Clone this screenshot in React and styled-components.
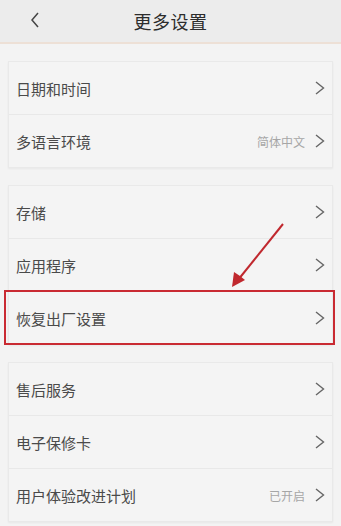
import React from "react";
import styled, { createGlobalStyle } from "styled-components";

const Global = createGlobalStyle`
  html, body { margin: 0; padding: 0; background: #f3f3f3; }
  body { font-family: "Noto Sans CJK SC", "Noto Sans", sans-serif; }
`;

const Page = styled.div`
  position: relative;
  width: 341px;
  height: 526px;
  overflow: hidden;
  background: #f3f3f3;
`;

const Header = styled.div`
  height: 42px;
  background: #ececec;
  border-bottom: 2px solid #ede0d6;
  display: flex;
  align-items: center;
  justify-content: center;
  position: relative;
`;

const Back = styled.svg`
  position: absolute;
  left: 30px;
  top: 12px;
`;

const Title = styled.div`
  font-size: 18px;
  color: #2c2c2c;
  letter-spacing: 0.5px;
`;

const List = styled.div`
  display: flex;
  flex-direction: column;
  gap: 17px;
  padding: 17px 8px 0 8px;
`;

const Card = styled.div`
  background: #f4f4f4;
  border: 1px solid #e9e9e9;
  box-shadow: 0 1px 2px rgba(0, 0, 0, 0.05);
  display: flex;
  flex-direction: column;
`;

const Row = styled.div`
  position: relative;
  height: 52px;
  display: flex;
  align-items: center;
  padding: 0 7px 0 7px;
  & + & { border-top: 1px solid #e8e8e8; }
`;

const Label = styled.div`
  flex: 1;
  font-size: 15px;
  color: #4a4a4a;
`;

const Value = styled.div`
  font-size: 12px;
  color: #a6a6a6;
  margin-right: 9px;
`;

const Highlight = styled.div`
  position: absolute;
  left: -5px;
  right: -3px;
  top: -2px;
  bottom: -1px;
  border: 2px solid #c92a32;
  pointer-events: none;
`;

const Arrow = styled.svg`
  position: absolute;
  left: 0;
  top: 0;
  pointer-events: none;
`;

const Chevron = () => (
  <svg width="11" height="14" viewBox="0 0 11 14">
    <path d="M2 1 L9.5 7 L2 13" fill="none" stroke="#666" strokeWidth="1.4" />
  </svg>
);

const Item = ({ label, value, highlight }) => (
  <Row>
    <Label>{label}</Label>
    {value && <Value>{value}</Value>}
    <Chevron />
    {highlight && <Highlight />}
  </Row>
);

export default function App() {
  return (
    <Page>
      <Global />
      <Header>
        <Back width="10" height="16" viewBox="0 0 10 16">
          <path d="M8 1 L2 8 L8 15" fill="none" stroke="#444" strokeWidth="1.5" />
        </Back>
        <Title>更多设置</Title>
      </Header>
      <List>
        <Card>
          <Item label="日期和时间" />
          <Item label="多语言环境" value="简体中文" />
        </Card>
        <Card>
          <Item label="存储" />
          <Item label="应用程序" />
          <Item label="恢复出厂设置" highlight />
        </Card>
        <Card>
          <Item label="售后服务" />
          <Item label="电子保修卡" />
          <Item label="用户体验改进计划" value="已开启" />
        </Card>
      </List>
      <Arrow width="341" height="526" viewBox="0 0 341 526">
        <line x1="283" y1="224" x2="238" y2="280" stroke="#c0282e" strokeWidth="2" />
        <path d="M232 287 L234 272 L240 276 L245 280 Z" fill="#c0282e" />
      </Arrow>
    </Page>
  );
}
